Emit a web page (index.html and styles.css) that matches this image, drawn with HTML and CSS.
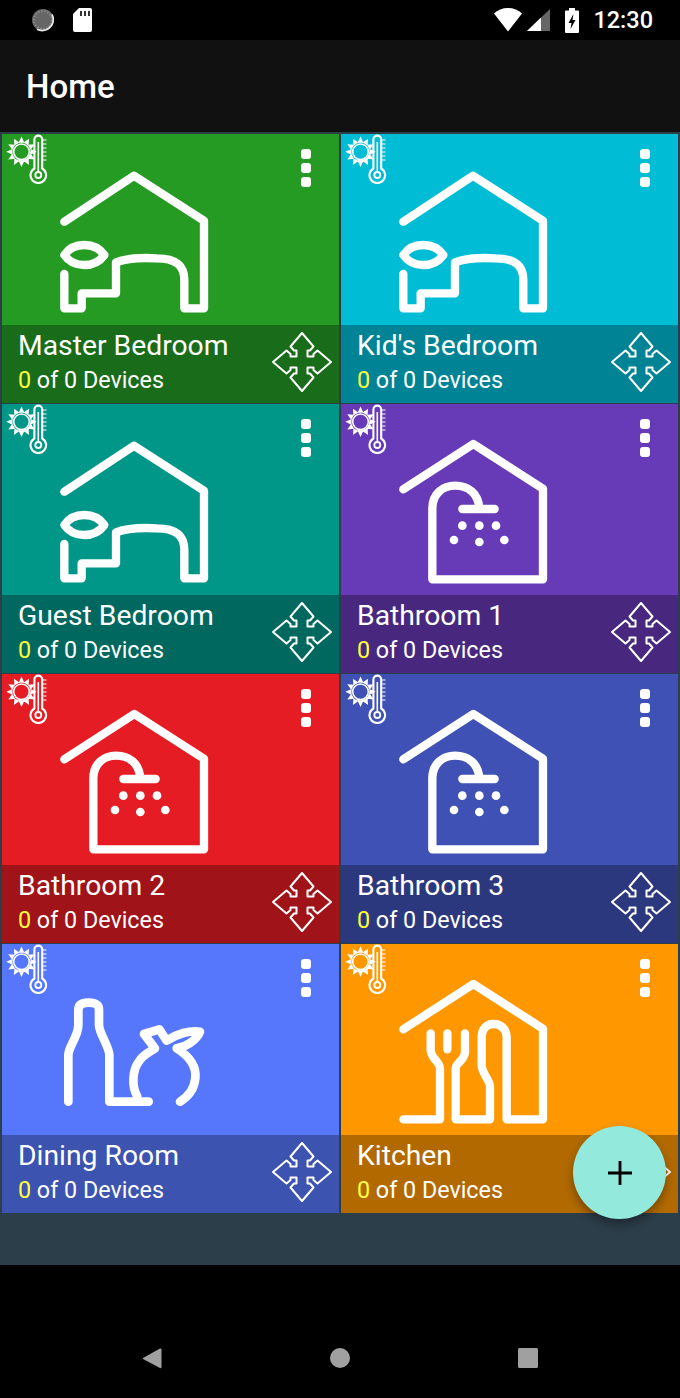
FILE: index.html
```html
<!DOCTYPE html>
<html lang="en">
<head>
<meta charset="utf-8">
<title>Home</title>
<link rel="stylesheet" href="styles.css">
</head>
<body>
<!-- Shared icon set -->
<svg class="icon-defs" aria-hidden="true">
  <symbol id="i-weather" viewBox="0 0 50 50">
    <g transform="translate(19.500 17.800)">
      <g fill="#fff">
        <path d="M15.200 0L9 -2.900V2.900ZM-15.200 0L-9 2.900V-2.900Z"/>
        <path transform="rotate(30)" d="M15.200 0L9 -2.900V2.900ZM-15.200 0L-9 2.900V-2.900Z"/>
        <path transform="rotate(60)" d="M15.200 0L9 -2.900V2.900ZM-15.200 0L-9 2.900V-2.900Z"/>
        <path transform="rotate(90)" d="M15.200 0L9 -2.900V2.900ZM-15.200 0L-9 2.900V-2.900Z"/>
        <path transform="rotate(120)" d="M15.200 0L9 -2.900V2.900ZM-15.200 0L-9 2.900V-2.900Z"/>
        <path transform="rotate(150)" d="M15.200 0L9 -2.900V2.900ZM-15.200 0L-9 2.900V-2.900Z"/>
        <path d="M8.600 -1.500A8.700 8.700 0 0 1 -5 6.800A8 8 0 0 0 8.600 -1.500Z"/>
      </g>
      <circle r="7.800" fill="none" stroke="#fff" stroke-width="1.500"/>
    </g>
    <path d="M32.400 34.500V5.500a3.900 3.900 0 0 1 7.800 0V34.500a7.800 7.800 0 1 1-7.800 0Z" fill="none" stroke="#fff" stroke-width="2.100"/>
    <path d="M36.300 8V37" stroke="#fff" stroke-width="1.600"/>
    <circle cx="36.300" cy="41" r="3" fill="none" stroke="#fff" stroke-width="1.800"/>
    <path d="M41 6H44.500M41 10H44.500M41 14H44.500M41 18H44.500M41 22H44.500M41 26H44.500" stroke="#fff" stroke-width="1"/>
  </symbol>
  <symbol id="i-bedroom" viewBox="6 12 1011 573">
    <g fill="none" stroke="#fff" stroke-width="25" stroke-linecap="round" stroke-linejoin="round">
      <path d="M193 275L402 137L612 272V535H553V450C553 405 525 385 470 385C420 382 380 385 348 397V490H245V535H193V432"/>
      <path d="M193 375C220 335 285 335 313 375C285 415 220 415 193 375Z"/>
    </g>
  </symbol>
  <symbol id="i-shower" viewBox="3 12 1011 573">
    <g fill="none" stroke="#fff" stroke-width="25" stroke-linecap="round" stroke-linejoin="round">
      <path d="M190 268L400 132L609 266V538H277V325C277 280 310 257 345 257C385 257 415 280 418 325"/>
      <path d="M367 327H464"/>
    </g>
    <g fill="#fff">
      <circle cx="367" cy="377" r="13"/><circle cx="418" cy="377" r="13"/><circle cx="468" cy="377" r="13"/>
      <circle cx="342" cy="420" r="13"/><circle cx="418" cy="426" r="13"/><circle cx="493" cy="420" r="13"/>
    </g>
  </symbol>
  <symbol id="i-dining" viewBox="6 12 1011 573">
    <g fill="none" stroke="#fff" stroke-width="26" stroke-linecap="round" stroke-linejoin="round">
      <path d="M205 485V345C205 320 235 290 235 255V210C235 192 250 188 265 188C285 188 297 192 297 210V255C297 280 328 320 328 345V485H446"/>
      <path d="M412 470C395 440 395 390 420 360C430 345 450 335 465 325L432 282L478 268L500 302C530 282 570 270 600 275C590 300 560 320 530 325C570 350 590 380 586 415C583 445 565 470 540 485"/>
    </g>
  </symbol>
  <symbol id="i-kitchen" viewBox="3 12 1011 573">
    <g fill="none" stroke="#fff" stroke-width="25" stroke-linecap="round" stroke-linejoin="round">
      <path d="M190 268L400 132L609 266V538H500V290C500 265 480 252 460 252C438 252 425 270 425 290V375C425 400 450 420 450 440V538H347V385C347 370 375 360 375 335V280"/>
      <path d="M190 538H300V385C300 365 272 355 272 330V280"/>
      <path d="M322 280V328"/>
    </g>
  </symbol>
  <symbol id="i-move" viewBox="-31 -31 62 62">
    <path d="M0-29L11.500-15.500L8-11.500H5.500V-5.500H11.500V-8L15.500-11.500L29 0L15.500 11.500L11.500 8V5.500H5.500V11.500H8L11.500 15.500L0 29L-11.500 15.500L-8 11.500H-5.500V5.500H-11.500V8L-15.500 11.500L-29 0L-15.500-11.500L-11.500-8V-5.500H-5.500V-11.500H-8L-11.500-15.500Z" fill="none" stroke="#fff" stroke-width="2" stroke-linejoin="round"/>
  </symbol>
</svg>

<div class="phone">
  <header class="status-bar">
    <div class="status-left">
      <svg class="st-sync" viewBox="0 0 24 24">
        <circle cx="12" cy="12" r="11" fill="#666"/>
        <circle cx="12" cy="12" r="9" fill="none" stroke="#8a8a8a" stroke-width="2" stroke-dasharray="1.500 1.600"/>
        <path d="M21 6.500A11 11 0 0 1 6 21.200" fill="none" stroke="#e8e8e8" stroke-width="1.800"/>
      </svg>
      <svg class="st-sd" viewBox="0 0 19 24">
        <path d="M6 0H17a2 2 0 0 1 2 2V22a2 2 0 0 1-2 2H2a2 2 0 0 1-2-2V6Z" fill="#fff"/>
        <path d="M8 3V8M12 3V8M16 3V8" stroke="#000" stroke-width="1.600"/>
      </svg>
    </div>
    <div class="status-right">
      <svg class="st-wifi" viewBox="0 0 28 24"><path d="M0 5.500C3.500 2 8.500 0 14 0S24.500 2 28 5.500L14 23.500Z" fill="#fff"/></svg>
      <svg class="st-signal" viewBox="0 0 23 22">
        <path d="M0 22L23 0V22Z" fill="#666"/>
        <path d="M0 22L14 8.600V22Z" fill="#fff"/>
      </svg>
      <svg class="st-battery" viewBox="0 0 14 25">
        <path d="M4 0H10V2.500H13a1 1 0 0 1 1 1V24a1 1 0 0 1-1 1H1a1 1 0 0 1-1-1V3.500a1 1 0 0 1 1-1H4Z" fill="#fff"/>
        <path d="M8.500 6L3.500 15H6.500L5.500 21L10.500 12H7.500Z" fill="#000"/>
      </svg>
      <span class="st-time">12:30</span>
    </div>
  </header>

  <div class="app-bar"><h1 class="app-title">Home</h1></div>

  <main class="rooms">
    <article class="tile green">
      <div class="tile-art">
        <svg class="weather"><use href="#i-weather"/></svg>
        <svg class="room-icon"><use href="#i-bedroom"/></svg>
        <div class="menu"><i></i><i></i><i></i></div>
      </div>
      <div class="tile-label">
        <div class="tile-text">
          <div class="room-name">Master Bedroom</div>
          <div class="room-count"><b>0</b> of 0 Devices</div>
        </div>
        <svg class="move"><use href="#i-move"/></svg>
      </div>
    </article>
    <article class="tile cyan">
      <div class="tile-art">
        <svg class="weather"><use href="#i-weather"/></svg>
        <svg class="room-icon"><use href="#i-bedroom"/></svg>
        <div class="menu"><i></i><i></i><i></i></div>
      </div>
      <div class="tile-label">
        <div class="tile-text">
          <div class="room-name">Kid's Bedroom</div>
          <div class="room-count"><b>0</b> of 0 Devices</div>
        </div>
        <svg class="move"><use href="#i-move"/></svg>
      </div>
    </article>
    <article class="tile teal">
      <div class="tile-art">
        <svg class="weather"><use href="#i-weather"/></svg>
        <svg class="room-icon"><use href="#i-bedroom"/></svg>
        <div class="menu"><i></i><i></i><i></i></div>
      </div>
      <div class="tile-label">
        <div class="tile-text">
          <div class="room-name">Guest Bedroom</div>
          <div class="room-count"><b>0</b> of 0 Devices</div>
        </div>
        <svg class="move"><use href="#i-move"/></svg>
      </div>
    </article>
    <article class="tile purple">
      <div class="tile-art">
        <svg class="weather"><use href="#i-weather"/></svg>
        <svg class="room-icon"><use href="#i-shower"/></svg>
        <div class="menu"><i></i><i></i><i></i></div>
      </div>
      <div class="tile-label">
        <div class="tile-text">
          <div class="room-name">Bathroom 1</div>
          <div class="room-count"><b>0</b> of 0 Devices</div>
        </div>
        <svg class="move"><use href="#i-move"/></svg>
      </div>
    </article>
    <article class="tile red">
      <div class="tile-art">
        <svg class="weather"><use href="#i-weather"/></svg>
        <svg class="room-icon"><use href="#i-shower"/></svg>
        <div class="menu"><i></i><i></i><i></i></div>
      </div>
      <div class="tile-label">
        <div class="tile-text">
          <div class="room-name">Bathroom 2</div>
          <div class="room-count"><b>0</b> of 0 Devices</div>
        </div>
        <svg class="move"><use href="#i-move"/></svg>
      </div>
    </article>
    <article class="tile indigo">
      <div class="tile-art">
        <svg class="weather"><use href="#i-weather"/></svg>
        <svg class="room-icon"><use href="#i-shower"/></svg>
        <div class="menu"><i></i><i></i><i></i></div>
      </div>
      <div class="tile-label">
        <div class="tile-text">
          <div class="room-name">Bathroom 3</div>
          <div class="room-count"><b>0</b> of 0 Devices</div>
        </div>
        <svg class="move"><use href="#i-move"/></svg>
      </div>
    </article>
    <article class="tile blue">
      <div class="tile-art">
        <svg class="weather"><use href="#i-weather"/></svg>
        <svg class="room-icon"><use href="#i-dining"/></svg>
        <div class="menu"><i></i><i></i><i></i></div>
      </div>
      <div class="tile-label">
        <div class="tile-text">
          <div class="room-name">Dining Room</div>
          <div class="room-count"><b>0</b> of 0 Devices</div>
        </div>
        <svg class="move"><use href="#i-move"/></svg>
      </div>
    </article>
    <article class="tile orange">
      <div class="tile-art">
        <svg class="weather"><use href="#i-weather"/></svg>
        <svg class="room-icon"><use href="#i-kitchen"/></svg>
        <div class="menu"><i></i><i></i><i></i></div>
      </div>
      <div class="tile-label">
        <div class="tile-text">
          <div class="room-name">Kitchen</div>
          <div class="room-count"><b>0</b> of 0 Devices</div>
        </div>
        <svg class="move"><use href="#i-move"/></svg>
      </div>
    </article>
  </main>

  <button class="fab" type="button" aria-label="Add room">
    <svg viewBox="0 0 22 22"><path d="M11 0V22M0 11H22" stroke="#000" stroke-width="2.600"/></svg>
  </button>

  <nav class="nav-bar">
    <svg class="nav-icon" viewBox="0 0 20 22"><path d="M1 11L18 1.500Q19.500 1 19.500 2.500V20Q19.500 21.500 18 21L1 12Q0.200 11.500 1 11Z" fill="#a0a0a0"/></svg>
    <svg class="nav-icon" viewBox="0 0 22 22"><circle cx="11" cy="11" r="11" fill="#a0a0a0"/></svg>
    <svg class="nav-icon" viewBox="0 0 20 20"><rect width="20" height="20" rx="1.500" fill="#a0a0a0"/></svg>
  </nav>
</div>
</body>
</html>
```

FILE: styles.css
```css
* { box-sizing: border-box; }

html, body {
  margin: 0;
  padding: 0;
  background: #000;
}

body {
  font-family: Roboto, "Liberation Sans", sans-serif;
  color: #fff;
}

.icon-defs {
  display: block;
  width: 0;
  height: 0;
  overflow: hidden;
}

.phone {
  position: relative;
  width: 680px;
  height: 1398px;
  overflow: hidden;
}

/* System status bar */
.status-bar {
  display: flex;
  justify-content: space-between;
  align-items: center;
  height: 40px;
  background: #000;
  padding: 0 27px 0 31px;
}

.status-left,
.status-right {
  display: flex;
  align-items: center;
}

.st-sync { width: 24px; height: 24px; margin-right: 18px; }
.st-sd { width: 19px; height: 24px; }
.st-wifi { width: 28px; height: 24px; margin-right: 5px; }
.st-signal { width: 23px; height: 22px; margin-right: 15px; }
.st-battery { width: 14px; height: 25px; margin-right: 14px; }

.st-time {
  font-size: 23.500px;
  font-weight: 500;
  line-height: 40px;
}

/* Toolbar */
.app-bar {
  display: flex;
  align-items: center;
  height: 92px;
  padding-left: 26px;
  background: #111;
}

.app-title {
  margin: 0;
  font-size: 33px;
  font-weight: 500;
}

/* Room grid */
.rooms {
  display: grid;
  grid-template-columns: 337px 337px;
  grid-auto-rows: 269px;
  column-gap: 2px;
  row-gap: 1px;
  height: 1133px;
  padding: 2px 2px 52px;
  background: #2c3e4a;
}

.tile {
  display: flex;
  flex-direction: column;
}

.green { background: #259b24; }
.cyan { background: #00bcd4; }
.teal { background: #009688; }
.purple { background: #673ab7; }
.red { background: #e51c23; }
.indigo { background: #3f51b5; }
.blue { background: #5677fc; }
.orange { background: #ff9800; }

/* Stacked layers of the coloured area */
.tile-art {
  display: grid;
  height: 191px;
}

.tile-art > * { grid-area: 1 / 1; }

.weather {
  width: 50px;
  height: 50px;
}

.room-icon {
  width: 337px;
  height: 191px;
}

.menu {
  display: flex;
  flex-direction: column;
  gap: 4.500px;
  justify-self: end;
  align-self: start;
  margin: 15px 28px 0 0;
}

.menu i {
  display: block;
  width: 10px;
  height: 9.500px;
  border-radius: 3px;
  background: #fff;
}

.tile-label {
  display: flex;
  justify-content: space-between;
  align-items: center;
  height: 78px;
  padding: 0 6px 0 16px;
  background: rgba(0, 0, 0, 0.3);
}

.tile-text { margin-bottom: 6px; }

.room-name {
  font-size: 28.300px;
  line-height: 36px;
}

.room-count {
  margin-top: 1px;
  font-size: 23.300px;
  line-height: 30px;
}

.room-count b {
  font-weight: 400;
  color: #ffff3b;
}

.move {
  width: 62px;
  height: 62px;
  margin-bottom: 4px;
}

/* Floating add button */
.fab {
  position: absolute;
  left: 573px;
  top: 1126px;
  display: flex;
  align-items: center;
  justify-content: center;
  width: 93px;
  height: 93px;
  padding: 0;
  border: 0;
  border-radius: 50%;
  background: #92e9dc;
  box-shadow: 0 5px 10px rgba(0, 0, 0, 0.35);
}

.fab svg { width: 24px; height: 24px; }

/* System navigation */
.nav-bar {
  display: flex;
  justify-content: center;
  align-items: center;
  gap: 168px;
  height: 133px;
  padding-top: 53px;
  background: #000;
}

.nav-icon {
  width: 20px;
  height: 22px;
}
```
